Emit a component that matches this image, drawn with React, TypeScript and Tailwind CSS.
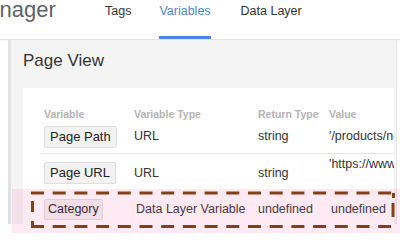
import React from "react";

function Btn({ children, small }: { children: React.ReactNode; small?: boolean }) {
  return (
    <span
      className={
        small
          ? "inline-flex items-center h-[21px] px-[3px] bg-[#f2f2f2] border border-[#dedede] rounded-[2px] text-[12.5px] text-[#222] whitespace-nowrap"
          : "inline-flex items-center h-[22px] px-[5px] bg-[#f2f2f2] border border-[#dedede] rounded-[2px] text-[13px] text-[#222] whitespace-nowrap"
      }
    >
      {children}
    </span>
  );
}

export default function App() {
  return (
    <div className="relative w-[400px] h-[233px] overflow-hidden bg-white font-['Liberation_Sans',Arial,sans-serif]">
      {/* Header */}
      <div className="flex h-[40px] border-b border-[#e2e2e2] shadow-[0_1px_1px_rgba(0,0,0,0.04)]">
        <div className="w-[57px] overflow-hidden whitespace-nowrap">
          <span className="block ml-[-31px] text-[22px] leading-[20px] text-[#5f6368]">Manager</span>
        </div>
        <div className="ml-[48px] flex text-[12.5px] leading-[15px] whitespace-nowrap">
          <div className="flex flex-col h-[39px] pt-[4px] text-[#333]">
            <span>Tags</span>
          </div>
          <div className="ml-[28px] flex flex-col h-[39px] pt-[4px] text-[#4f82d6]">
            <span>Variables</span>
            <div className="mt-auto h-[3px] bg-[#4a84e6]" />
          </div>
          <div className="ml-[30px] flex flex-col h-[39px] pt-[4px] text-[#333]">
            <span>Data Layer</span>
          </div>
        </div>
      </div>

      {/* Panel */}
      <div className="flex h-[184px]">
        <div className="ml-[8px] w-[389px] flex flex-col border-l-[3px] border-l-[#e2e2e2] border-r border-r-[#e6e6e6] bg-[#f4f4f4] pl-[12px] pr-[2px]">
          <div className="h-[48px] pt-[11px] text-[17px] leading-[20px] text-[#333] whitespace-nowrap">Page View</div>
          <div className="flex-1 bg-white overflow-hidden pl-[17px] pt-[20px] text-[12.5px] text-[#333] whitespace-nowrap">
            <div className="grid grid-cols-[90px_124px_71px_1fr] h-[12px] text-[10.5px] font-bold leading-[12px] text-[#b3b3b3]">
              <div className="pl-[4px]">Variable</div>
              <div className="pl-[4px]">Variable Type</div>
              <div className="pl-[4px]">Return Type</div>
              <div className="pl-[4px]">Value</div>
            </div>
            <div className="grid grid-cols-[90px_124px_71px_1fr] h-[34px] items-center border-b border-[#e6e6e6]">
              <div className="pl-[4px]"><Btn>Page Path</Btn></div>
              <div className="pl-[4px]">URL</div>
              <div className="pl-[4px]">string</div>
              <div className="pl-[4px] overflow-hidden">'/products/new-arrivals'</div>
            </div>
            <div className="grid grid-cols-[90px_124px_71px_1fr] h-[38px] items-center">
              <div className="pl-[4px]"><Btn>Page URL</Btn></div>
              <div className="pl-[4px]">URL</div>
              <div className="pl-[4px]">string</div>
              <div className="pl-[4px] self-start pt-[3px] leading-[15px] overflow-hidden">'https://www.example.com/'</div>
            </div>
            <div className="grid grid-cols-[90px_124px_71px_1fr] h-[35px] items-center">
              <div className="pl-[4px]"><Btn small>Category</Btn></div>
              <div className="pl-[6px]">Data Layer Variable</div>
              <div className="pl-[4px]">undefined</div>
              <div className="pl-[6px]">undefined</div>
            </div>
          </div>
        </div>
      </div>

      {/* Pink highlight overlay */}
      <div className="pointer-events-none absolute left-[12px] top-[189px] w-[388px] h-[44px] bg-[rgba(240,80,150,0.12)]" />

      {/* Dashed annotation box */}
      <svg className="pointer-events-none absolute left-0 top-0" width="400" height="233" viewBox="0 0 400 233">
        <g stroke="#80401a" strokeWidth="3" fill="none">
          <line x1="31" y1="193" x2="395" y2="193" strokeDasharray="13 8.7" />
          <line x1="393.5" y1="193" x2="393.5" y2="198" />
          <line x1="32.5" y1="201" x2="32.5" y2="212" />
          <line x1="32.5" y1="221" x2="32.5" y2="227" />
          <line x1="393" y1="203" x2="393" y2="217" />
          <line x1="31" y1="226.5" x2="391" y2="226.5" strokeDasharray="13 8.7" />
        </g>
      </svg>
    </div>
  );
}
